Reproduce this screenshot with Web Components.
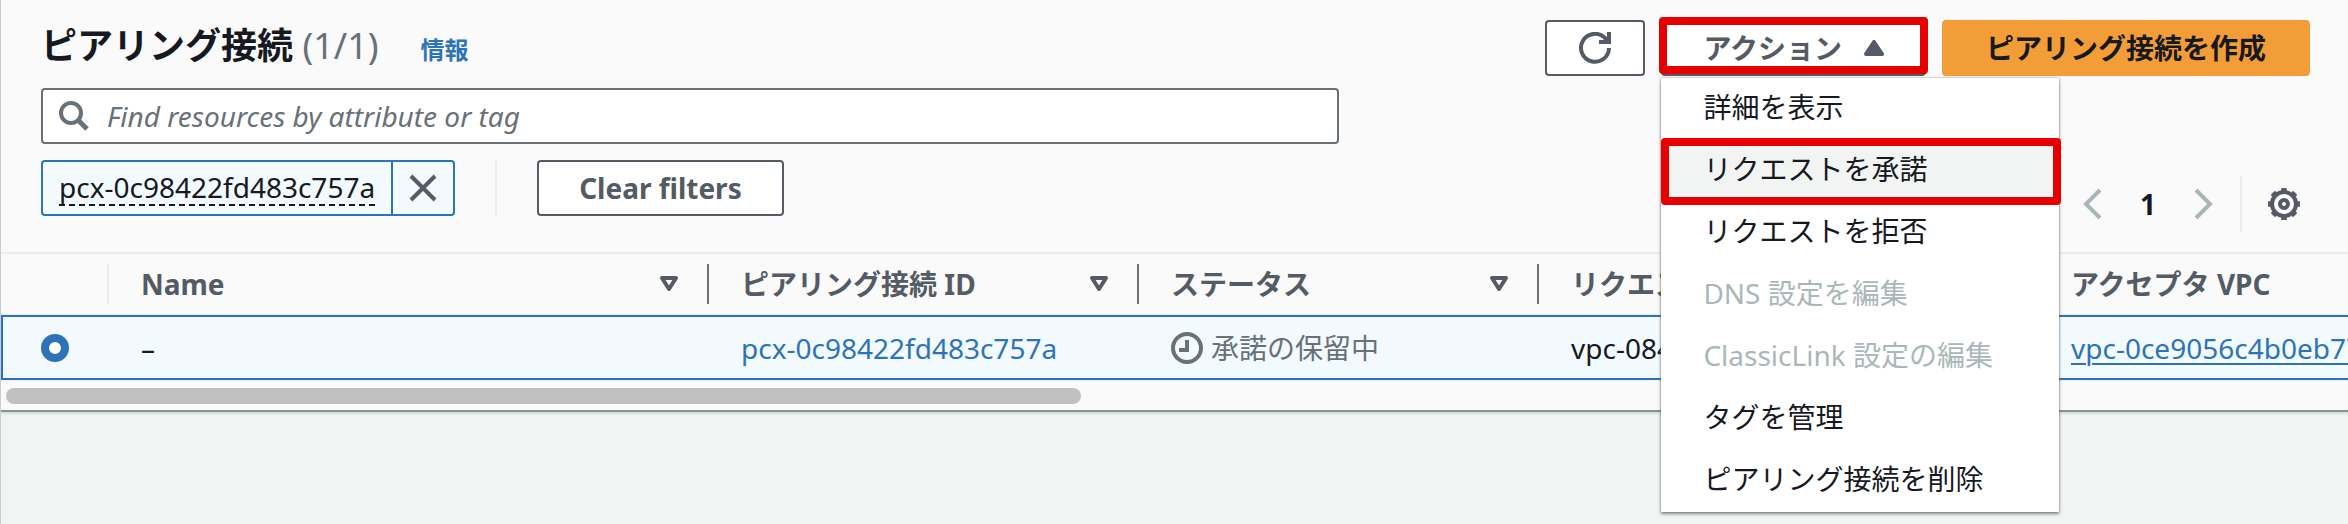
<!DOCTYPE html>
<html lang="ja">
<head>
<meta charset="utf-8">
<title>ピアリング接続</title>
<style>
  html { background: #f2f3f3; }
  body {
    box-sizing: border-box;
    min-height: 100vh;
    margin: 0;
    border-left: 1px solid #c8cdd0;
    color: #16191f;
    font: 28px/44px "Noto Sans", "Noto Sans CJK JP", sans-serif;
  }
</style>
</head>
<body>
<peering-panel></peering-panel>

<script>
// Icons
const icons = {
  search: '<svg viewBox="0 0 32 32" width="32" height="32"><circle cx="12" cy="13" r="10" stroke-width="4"/><path d="M19 20l9 9" stroke-width="5"/></svg>',
  close: '<svg viewBox="0 0 32 32" width="32" height="32"><path d="M4 4l24 24M28 4L4 28" stroke-width="4"/></svg>',
  refresh: '<svg viewBox="0 0 32 32" width="32" height="32"><path d="M30 16a14 14 0 1 1-4-10l3 3" stroke-width="4"/><path d="M30 0v10H20" stroke-width="4"/></svg>',
  prev: '<svg viewBox="0 0 32 32" width="32" height="32"><path d="M24 2L10 16l14 14" stroke-width="4"/></svg>',
  next: '<svg viewBox="0 0 32 32" width="32" height="32"><path d="M8 2l14 14L8 30" stroke-width="4"/></svg>',
  gear: '<svg viewBox="0 0 32 32" width="32" height="32"><circle cx="16" cy="16" r="12" stroke-width="4"/><circle cx="16" cy="16" r="14" stroke-width="4" pathLength="80" stroke-dasharray="5 5" stroke-dashoffset="2.5"/><circle cx="16" cy="16" r="4" stroke-width="4"/></svg>',
  sort: '<svg viewBox="0 0 20 16" width="20" height="16"><path d="M3 2h14l-7 11z" stroke-width="4" stroke-linejoin="round"/></svg>',
  clock: '<svg viewBox="0 0 32 32" width="32" height="32"><circle cx="16" cy="16" r="14" stroke-width="4"/><path d="M16 8v10H8" stroke-width="4"/></svg>',
  up: '<svg viewBox="0 0 20 16" width="20" height="16"><path d="M10 2l8 12H2z" fill="currentColor" stroke-width="4" stroke-linejoin="round"/></svg>'
};

const base = `
  * { box-sizing: border-box; }
  svg { display: block; fill: none; stroke: currentColor; flex: none; }
  button { font: inherit; color: inherit; margin: 0; padding: 0; border: 0; background: none; cursor: pointer; }
`;

// Icon
class UiIcon extends HTMLElement {
  constructor() {
    super();
    const shadow = this.attachShadow({mode: 'open'});
    shadow.innerHTML = `
      <style>${base} :host { display: inline-flex; flex: none; }</style>
      ${icons[this.getAttribute('name')]}
    `;
  }
}
customElements.define('ui-icon', UiIcon);

// Button
class UiButton extends HTMLElement {
  constructor() {
    super();
    const shadow = this.attachShadow({mode: 'open'});
    const label = this.getAttribute('label');
    shadow.innerHTML = `
      <style>
        ${base}
        :host { display: block; color: #545b64; }
        button { display: flex; align-items: center; justify-content: center; gap: 22px; height: 56px; padding: 0 40px; border: 2px solid #545b64; border-radius: 4px; background: #fff; font-weight: 700; white-space: nowrap; }
        :host([variant=primary]) button { color: #16191f; background: #f29d38; border-color: #f29d38; padding: 0 42px; }
        :host([variant=icon]) button { padding: 0 32px; }
      </style>
      <button type="button" ${label ? `aria-label="${label}"` : ''}><slot></slot></button>
    `;
  }
}
customElements.define('ui-button', UiButton);

// Search box
class SearchBox extends HTMLElement {
  constructor() {
    super();
    const shadow = this.attachShadow({mode: 'open'});
    shadow.innerHTML = `
      <style>
        ${base}
        :host { display: block; }
        label { display: flex; align-items: center; gap: 16px; height: 56px; padding: 0 16px; border: 2px solid #687078; border-radius: 4px; background: #fff; color: #687078; }
        input { flex: 1; min-width: 0; border: 0; padding: 0; outline: 0; background: none; font: inherit; color: #16191f; }
        input::placeholder { color: #687078; font-style: italic; opacity: 1; }
      </style>
      <label><ui-icon name="search"></ui-icon><input type="text" aria-label="Find resources" placeholder="Find resources by attribute or tag"></label>
    `;
  }
}
customElements.define('search-box', SearchBox);

// Filter token
class FilterToken extends HTMLElement {
  constructor() {
    super();
    const shadow = this.attachShadow({mode: 'open'});
    shadow.innerHTML = `
      <style>
        ${base}
        :host { display: flex; height: 56px; border: 2px solid #2e73b8; border-radius: 4px; background: #f2fafd; }
        .text { display: flex; align-items: center; padding: 0 16px; border-right: 2px solid #2e73b8; }
        .text button { line-height: 34px; border-bottom: 2px dashed #16191f; }
        .remove { display: flex; align-items: center; justify-content: center; width: 60px; color: #545b64; }
      </style>
      <span class="text"><button type="button"><slot></slot></button></span>
      <button class="remove" type="button" aria-label="Remove filter"><ui-icon name="close"></ui-icon></button>
    `;
    shadow.querySelector('.remove').onclick = () => this.remove();
  }
}
customElements.define('filter-token', FilterToken);

// Menu item
class MenuItem extends HTMLElement {
  constructor() {
    super();
    const shadow = this.attachShadow({mode: 'open'});
    shadow.innerHTML = `
      <style>
        ${base}
        :host { display: block; position: relative; }
        button { display: block; width: 100%; height: 62px; padding: 0 42px 4px; text-align: left; white-space: nowrap; }
        button:disabled { color: #aab7b8; cursor: default; }
        :host([marked]) button { background: #f2f3f3; }
        :host([marked])::after { content: ""; position: absolute; inset: -2px -2px -3px 0; border: 8px solid #e60000; border-radius: 4px; pointer-events: none; }
      </style>
      <button type="button" role="menuitem" ${this.hasAttribute('disabled') ? 'disabled' : ''}><slot></slot></button>
    `;
  }
}
customElements.define('menu-item', MenuItem);

// Action menu
class ActionMenu extends HTMLElement {
  constructor() {
    super();
    const shadow = this.attachShadow({mode: 'open'});
    shadow.innerHTML = `
      <style>
        ${base}
        :host { display: block; position: relative; }
        .frame { position: absolute; inset: -3px -2px 2px; border: 8px solid #e60000; border-radius: 4px; pointer-events: none; }
        .menu { position: absolute; z-index: 10; top: 100%; left: 0; width: 398px; margin-top: 2px; background: #fff; box-shadow: 0 2px 3px #545b64aa, 0 0 2px #545b6499; }
        .menu[hidden] { display: none; }
      </style>
      <ui-button>アクション<ui-icon name="up"></ui-icon></ui-button>
      <div class="frame"></div>
      <div class="menu" role="menu"><slot></slot></div>
    `;
    const menu = shadow.querySelector('.menu');
    shadow.querySelector('ui-button').onclick = () => { menu.hidden = !menu.hidden; };
  }
}
customElements.define('action-menu', ActionMenu);

// Pagination
class PageNav extends HTMLElement {
  constructor() {
    super();
    const shadow = this.attachShadow({mode: 'open'});
    shadow.innerHTML = `
      <style>
        ${base}
        :host { display: flex; align-items: center; height: 56px; }
        nav { display: flex; align-items: center; gap: 30px; padding-right: 20px; }
        nav button { color: #aab7b8; }
        nav .page { width: 20px; color: #16191f; font-weight: 700; justify-content: center; }
        .settings { display: flex; align-items: center; height: 100%; padding-left: 26px; padding-right: 10px; border-left: 2px solid #eaeded; color: #545b64; }
        button { display: flex; }
      </style>
      <nav aria-label="Pagination">
        <button type="button" aria-label="Previous page"><ui-icon name="prev"></ui-icon></button>
        <button type="button" class="page">1</button>
        <button type="button" aria-label="Next page"><ui-icon name="next"></ui-icon></button>
      </nav>
      <div class="settings"><button type="button" aria-label="Settings"><ui-icon name="gear"></ui-icon></button></div>
    `;
  }
}
customElements.define('page-nav', PageNav);

// Table of connections
class PeeringTable extends HTMLElement {
  constructor() {
    super();
    const shadow = this.attachShadow({mode: 'open'});
    const columns = [
      ['Name', 600], ['ピアリング接続 ID', 430], ['ステータス', 400], ['リクエスタ VPC', 500], ['アクセプタ VPC', 600]
    ];
    shadow.innerHTML = `
      <style>
        ${base}
        :host { display: block; overflow: hidden; }
        table { table-layout: fixed; width: 2638px; border-spacing: 0; }
        th, td { padding: 0; text-align: left; white-space: nowrap; }
        th { height: 62px; padding: 10px 0; border-top: 2px solid #eaeded; border-bottom: 1px solid #eaeded; color: #545b64; }
        th > div { display: flex; align-items: center; justify-content: space-between; height: 40px; padding: 0 28px 0 32px; border-right: 2px solid #687078; }
        th.select > div { border-color: #eaeded; }
        td { height: 65px; padding-left: 32px; border: solid #2e73b8; border-width: 2px 0; background: #f2fafd; }
        td.select { padding-left: 38px; border-left-width: 2px; }
        input { display: block; appearance: none; width: 28px; height: 28px; margin: 0; border: 8px solid #2e73b8; border-radius: 50%; background: #fff; }
        a { color: #2e73b8; text-decoration: none; }
        a.vpc { text-decoration: underline; text-decoration-thickness: 2px; text-underline-offset: 4px; }
        .status { display: flex; align-items: center; gap: 8px; color: #687078; }
        .track { padding: 7px 5px 6px; border-top: 1px solid #eaeded; }
        .thumb { width: 46%; height: 16px; border-radius: 8px; background: #c1c1c1; }
      </style>
      <table>
        <colgroup><col style="width: 108px">${columns.map(c => `<col style="width: ${c[1]}px">`).join('')}</colgroup>
        <thead><tr>
          <th class="select"><div></div></th>
          ${columns.map(c => `<th scope="col"><div>${c[0]}<ui-icon name="sort"></ui-icon></div></th>`).join('')}
        </tr></thead>
        <tbody><tr>
          <td class="select"><input type="radio" name="row" aria-label="pcx-0c98422fd483c757a" checked></td>
          <td>–</td>
          <td><a href="#pcx">pcx-0c98422fd483c757a</a></td>
          <td><span class="status"><ui-icon name="clock"></ui-icon>承諾の保留中</span></td>
          <td>vpc-084</td>
          <td><a class="vpc" href="#vpc">vpc-0ce9056c4b0eb77</a></td>
        </tr></tbody>
      </table>
      <div class="track"><div class="thumb"></div></div>
    `;
  }
}
customElements.define('peering-table', PeeringTable);

// Panel
class PeeringPanel extends HTMLElement {
  constructor() {
    super();
    const shadow = this.attachShadow({mode: 'open'});
    shadow.innerHTML = `
      <style>
        ${base}
        :host { display: block; background: #fafafa; border-bottom: 2px solid #879196; box-shadow: 0 2px 2px #d5dbdb; }
        header { display: flex; align-items: flex-start; justify-content: space-between; padding: 20px 38px 0 40px; }
        .heading { display: flex; align-items: baseline; }
        h1 { margin: 0; font-size: 36px; line-height: 52px; }
        h1 span { color: #687078; font-weight: 400; }
        .info { margin-left: 42px; color: #2e73b8; font-size: 24px; font-weight: 700; text-decoration: none; }
        .actions { display: flex; gap: 16px; }
        search-box { width: 57%; padding: 12px 0 0 40px; }
        .filters { display: flex; align-items: center; padding: 16px 38px 0 40px; }
        .clear { margin-left: 40px; padding-left: 40px; border-left: 2px solid #eaeded; }
        page-nav { margin-left: auto; margin-top: 16px; }
        .filters > :not(page-nav) { margin-bottom: 16px; }
        peering-table { margin-top: 20px; }
      </style>
      <header>
        <div class="heading">
          <h1>ピアリング接続 <span>(1/1)</span></h1>
          <a class="info" href="#info">情報</a>
        </div>
        <div class="actions">
          <ui-button variant="icon" label="Refresh"><ui-icon name="refresh"></ui-icon></ui-button>
          <action-menu>
            <menu-item>詳細を表示</menu-item>
            <menu-item marked>リクエストを承諾</menu-item>
            <menu-item>リクエストを拒否</menu-item>
            <menu-item disabled>DNS 設定を編集</menu-item>
            <menu-item disabled>ClassicLink 設定の編集</menu-item>
            <menu-item>タグを管理</menu-item>
            <menu-item>ピアリング接続を削除</menu-item>
          </action-menu>
          <ui-button variant="primary">ピアリング接続を作成</ui-button>
        </div>
      </header>
      <search-box></search-box>
      <div class="filters">
        <filter-token>pcx-0c98422fd483c757a</filter-token>
        <div class="clear"><ui-button>Clear filters</ui-button></div>
        <page-nav></page-nav>
      </div>
      <peering-table></peering-table>
    `;
  }
}
customElements.define('peering-panel', PeeringPanel);
</script>
</body>
</html>
